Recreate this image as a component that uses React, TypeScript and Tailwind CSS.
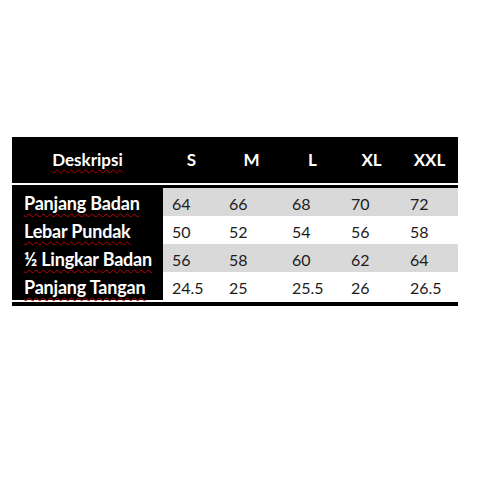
import React from 'react';

const sizes = ['S', 'M', 'L', 'XL', 'XXL'];
const colWidths = ['w-[57px]', 'w-[63px]', 'w-[59px]', 'w-[59px]', 'w-[57px]'];

const rows = [
  { label: 'Panjang Badan', values: ['64', '66', '68', '70', '72'], shaded: true },
  { label: 'Lebar Pundak', values: ['50', '52', '54', '56', '58'], shaded: false },
  { label: '½ Lingkar Badan', values: ['56', '58', '60', '62', '64'], shaded: true },
  { label: 'Panjang Tangan', values: ['24.5', '25', '25.5', '26', '26.5'], shaded: false },
];

const squiggle = 'underline decoration-wavy decoration-red-700 decoration-1 underline-offset-[3px]';

const App: React.FC = () => {
  return (
    <div className="w-[480px] h-[480px] bg-white pt-[137px] pl-[12px] font-['Lato',sans-serif]">
      <div className="w-[446px]">
        {/* header */}
        <div className="flex h-[46px] bg-black text-white font-bold text-[17px]">
          <div className="w-[151px] flex items-center justify-center">
            <span className={squiggle}>Deskripsi</span>
          </div>
          {sizes.map((s, i) => (
            <div key={s} className={`${colWidths[i]} flex items-center justify-center`}>
              {s}
            </div>
          ))}
        </div>
        <div className="h-[2px] bg-white"></div>

        {/* body */}
        <div className="bg-black pt-[3px]">
          {rows.map((row) => (
            <div key={row.label} className="flex h-[28px]">
              <div className="w-[151px] pl-[12px] pt-[3px] flex items-center text-white font-bold text-[18px] tracking-[-0.2px] whitespace-nowrap">
                <span className={squiggle}>{row.label}</span>
              </div>
              {row.values.map((v, i) => (
                <div
                  key={i}
                  className={`${colWidths[i]} pl-[9px] pt-[4px] flex items-center text-[16px] text-[#1c1c1c] ${
                    row.shaded ? 'bg-[#d9d9d9]' : 'bg-white'
                  }`}
                >
                  {v}
                </div>
              ))}
            </div>
          ))}
        </div>
        <div className="h-[2px] bg-white"></div>
        <div className="h-[4px] bg-black"></div>
      </div>
    </div>
  );
};

export default App;
